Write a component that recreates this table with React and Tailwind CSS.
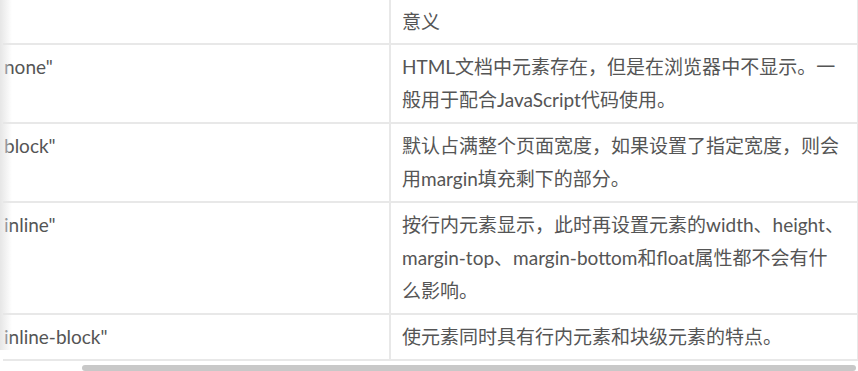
import React from 'react';

const rows = [
  { key: 'none"', text: 'HTML文档中元素存在，但是在浏览器中不显示。一般用于配合JavaScript代码使用。' },
  { key: 'block"', text: '默认占满整个页面宽度，如果设置了指定宽度，则会用margin填充剩下的部分。' },
  { key: 'inline"', text: '按行内元素显示，此时再设置元素的width、height、margin-top、margin-bottom和float属性都不会有什么影响。' },
  { key: 'inline-block"', text: '使元素同时具有行内元素和块级元素的特点。' },
];

const font = { fontFamily: 'Lato, "Noto Sans CJK SC", sans-serif' };

const App = () => {
  return (
    <div className="w-[858px] h-[371px] bg-white overflow-hidden relative" style={font}>
      <div className="pl-[3px]">
        <table className="table-fixed w-[855px] border-collapse text-[19px] leading-[33px] text-[#555555]">
          <colgroup>
            <col className="w-[387px]" />
            <col className="w-[468px]" />
          </colgroup>
          <tbody>
            <tr>
              <td className="h-[44px] border-r-2 border-b-2 border-[#e8e8e8] px-px"></td>
              <td className="h-[44px] border-r-2 border-b-2 border-[#e8e8e8] pl-[11px] pr-[13px] align-middle">意义</td>
            </tr>
            {rows.map((r, i) => (
              <tr key={i}>
                <td className="border-r-2 border-b-2 border-[#e8e8e8] px-px pt-[5px] pb-[6px] align-top whitespace-nowrap overflow-hidden">{r.key}</td>
                <td className="border-r-2 border-b-2 border-[#e8e8e8] pl-[11px] pr-[13px] pt-[5px] pb-[6px] align-top">{r.text}</td>
              </tr>
            ))}
          </tbody>
        </table>
        <div className="h-[12px] relative">
          <div className="absolute left-[79px] right-[2px] top-[4px] h-[6px] rounded-full bg-[#c8c8c8]"></div>
        </div>
      </div>
      <div className="absolute left-0 top-0 w-[12px] h-[350px] bg-gradient-to-r from-[#e6e6e6] to-transparent pointer-events-none"></div>
    </div>
  );
};

export default App;
